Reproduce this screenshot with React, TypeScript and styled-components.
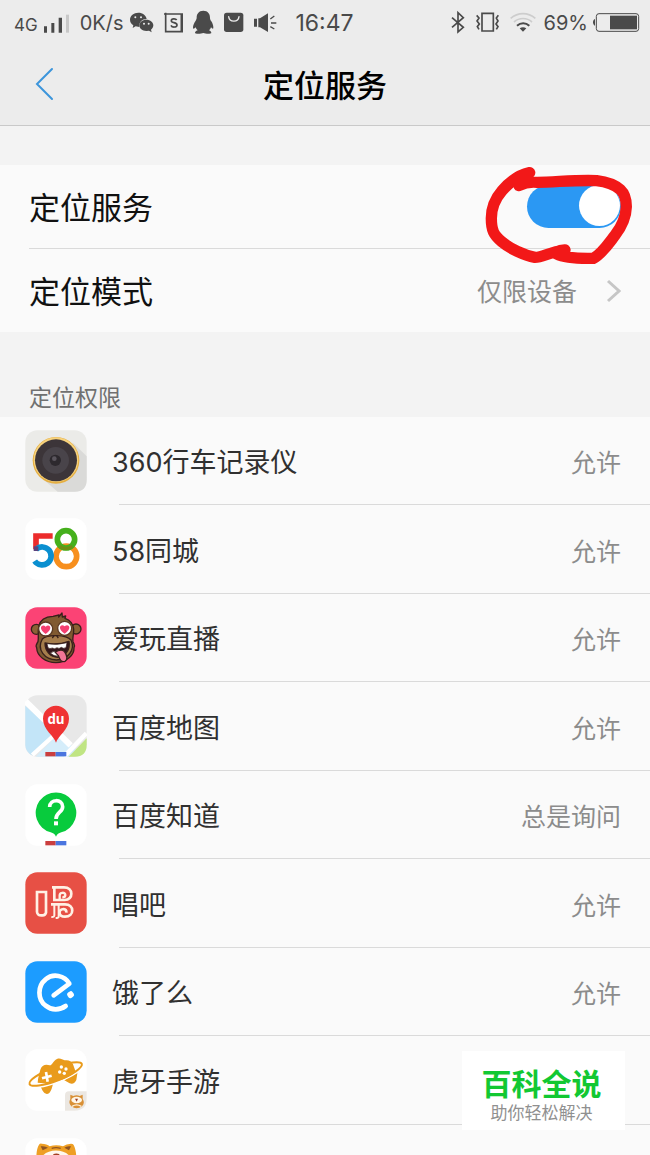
import React from 'react';
import styled, { createGlobalStyle } from 'styled-components';

const GlobalStyle = createGlobalStyle`
  *, *::before, *::after { box-sizing: border-box; }
  body { margin: 0; background: #f3f3f3; }
  button { margin: 0; padding: 0; border: 0; background: none; font: inherit; color: inherit; text-align: left; cursor: pointer; }
  h1, h2, p, ul { margin: 0; padding: 0; font-weight: 400; list-style: none; }
  svg { display: block; flex: none; }
`;

const Screen = styled.div`
  position: relative;
  display: flex;
  flex-direction: column;
  height: 100vh;
  overflow: hidden;
  background: #f3f3f3;
  color: #111;
  font-family: Inter, 'Noto Sans CJK SC', sans-serif;
`;

const Top = styled.header`
  flex: none;
  background: #ececec;
  border-bottom: 1px solid #c9c9c9;
`;

const StatusBar = styled.div`
  display: flex;
  justify-content: space-between;
  align-items: center;
  height: 43px;
  padding: 0 10px 0 14px;
  color: #4a4a4a;
`;

const StatusGroup = styled.div<{ $gap: number }>`
  display: flex;
  align-items: center;
  gap: ${(p) => p.$gap}px;
`;

const StatusText = styled.span<{ $size: number; $low?: boolean }>`
  font-size: ${(p) => p.$size}px;
  line-height: 24px;
  padding-top: ${(p) => (p.$low ? 6 : 2)}px;
  white-space: nowrap;
`;

const Clock = styled.time`
  margin-left: 9px;
  padding-top: 2px;
  font-size: 23px;
  line-height: 28px;
`;

const TitleBar = styled.div`
  display: grid;
  grid-template-columns: 1fr auto 1fr;
  align-items: center;
  height: 82px;
  padding: 0 29px;
`;

const BackButton = styled.button`
  justify-self: start;
  && { padding: 4px 6px; }
`;

const Title = styled.h1`
  padding-top: 3px;
  font-size: 31px;
  line-height: 40px;
  font-weight: 500;
  color: #000;
`;

const Panel = styled.section`
  flex: none;
  margin-top: 39px;
  background: #fafafa;
`;

const settingRow = `
  position: relative;
  display: flex;
  align-items: center;
  justify-content: space-between;
  width: 100%;
  height: 83px;
  padding: 0 29px;
`;

const SwitchRow = styled.label`
  ${settingRow}
`;

const LinkRow = styled.button`
  && { ${settingRow} }
`;

const SettingName = styled.span`
  padding-top: 2px;
  font-size: 31px;
  line-height: 40px;
`;

const Divider = styled.div<{ $inset: number }>`
  flex: none;
  height: 1px;
  margin-left: ${(p) => p.$inset}px;
  background: #dadada;
`;

const Switch = styled.input`
  appearance: none;
  display: flex;
  justify-content: flex-end;
  width: 94px;
  height: 43px;
  margin: 0;
  padding: 0 1px 2px;
  border-radius: 22px;
  background: #2b98f3;
  &::before {
    content: '';
    width: 41px;
    height: 41px;
    border-radius: 50%;
    background: #fff;
  }
  &:not(:checked) { background: #ccc; justify-content: flex-start; }
`;

const Marker = styled.svg`
  position: absolute;
  top: -10px;
  right: 0;
  z-index: 1;
  pointer-events: none;
`;

const Value = styled.span`
  padding-top: 2px;
  color: #8c8c8c;
  font-size: 25px;
  line-height: 36px;
`;

const ValueGroup = styled.span`
  display: flex;
  align-items: center;
  gap: 29px;
`;

const SectionLabel = styled.h2`
  flex: none;
  && { padding: 49px 29px 2px; }
  font-size: 23px;
  line-height: 34px;
  color: #707070;
`;

const AppList = styled.ul`
  background: #fafafa;
`;

const AppItem = styled.li`
  display: flex;
  flex-direction: column;
  height: 88px;
  &:nth-child(even) { height: 89px; }
`;

const AppButton = styled.button`
  flex: 1;
  display: flex;
  align-items: center;
  width: 100%;
  && { padding: 0 29px 0 25px; }
`;

const AppName = styled.span`
  flex: 1;
  margin-left: 25px;
  padding-top: 5px;
  font-size: 27px;
  line-height: 36px;
  color: #303030;
`;

const Permission = styled(Value)`
  padding-top: 5px;
`;

const Badge = styled.aside`
  position: absolute;
  right: 25px;
  bottom: 25px;
  width: 163px;
  padding: 14px 4px 6px 0;
  background: #fff;
  text-align: center;
`;

const BadgeTitle = styled.p`
  font-size: 30px;
  line-height: 38px;
  && { font-weight: 700; }
  color: #12c832;
`;

const BadgeText = styled.p`
  font-size: 17px;
  line-height: 21px;
  color: #909090;
`;

/* Status glyphs are drawn on a grid three times their displayed size. */
const Glyph = ({ x, w, children }: { x: number; w: number; children: React.ReactNode }) => (
  <svg width={w} height={24} viewBox={`${x} 28 ${w * 3} 72`} fill="#4a4a4a" aria-hidden="true">
    {children}
  </svg>
);

const Signal = () => (
  <Glyph x={129} w={26}>
    <path d="M129 77h9v19h-9zM151 67h9v29h-9zM173 51h10v45h-10z" />
    <path d="M195 42h9v54h-9z" fill="#c8c8c8" />
  </Glyph>
);

const WeChat = () => (
  <Glyph x={386} w={24}>
    <path d="M411 36c-14 0-25 9-25 21 0 7 4 13 10 17l-2 8 9-5 11 2c-2-14 8-24 22-24-2-11-12-19-25-19z" />
    <path d="M435 57c-12 0-21 8-21 17 0 10 9 17 21 17l8-1 8 5-2-8c4-3 7-8 7-13 0-9-9-17-21-17z" />
    <g fill="#ececec">
      <circle cx="402" cy="50" r="3" /><circle cx="419" cy="50" r="3" />
      <circle cx="428" cy="69" r="3" /><circle cx="442" cy="69" r="3" />
    </g>
  </Glyph>
);

const Scan = () => (
  <Glyph x={487} w={19}>
    <path d="M487 40h55v53h-50V36M539 40v53" fill="none" stroke="#4a4a4a" strokeWidth="5" />
    <path d="M525 58c-3-5-16-5-16 2 0 8 17 4 17 13 0 8-15 8-18 1" fill="none" stroke="#4a4a4a" strokeWidth="5" />
  </Glyph>
);

const Penguin = () => (
  <Glyph x={576} w={21}>
    <path d="M607 30c-14 0-20 10-20 21 0 4-2 7-4 11-4 6-7 13-7 19 0 5 4 4 8-1 1 4 3 7 6 9-6 2-8 5-8 8 0 3 18 3 25 0 7 3 24 3 24 0 0-3-2-6-7-8 3-2 5-5 6-9 4 5 7 6 7 1 0-6-2-13-6-19-3-4-4-7-4-11 0-11-6-21-20-21z" />
  </Glyph>
);

const Bag = () => (
  <Glyph x={671} w={20}>
    <rect x="671" y="36" width="58" height="58" rx="8" />
    <path d="M685 48c2 18 29 18 31 0" fill="none" stroke="#ececec" strokeWidth="4" strokeLinecap="round" />
  </Glyph>
);

const Speaker = () => (
  <Glyph x={762} w={23}>
    <path d="M762 54h9v24h-9zM775 53h5l24-15v56l-24-14h-5z" />
    <path d="M811 55l12-9M813 67h16M811 78l12 7" stroke="#4a4a4a" strokeWidth="4" />
  </Glyph>
);

const Bluetooth = () => (
  <Glyph x={388} w={15}>
    <path d="M391 51l34 29-16 14V36l16 15-34 29" fill="none" stroke="#4a4a4a" strokeWidth="5" />
  </Glyph>
);

const Vibrate = () => (
  <Glyph x={466} w={24}>
    <path d="M484 38h34v53h-34zM468 44l7 8-6 9 7 9-6 8 5 8M533 44l-6 8 5 9-6 9 6 8-5 8" fill="none" stroke="#4a4a4a" strokeWidth="5" />
  </Glyph>
);

const Wifi = () => (
  <Glyph x={570} w={26}>
    <path d="M572 53c22-19 52-19 74 0M582 64c16-14 38-14 54 0" fill="none" stroke="#cdcdcd" strokeWidth="5" />
    <path d="M591 75c11-10 26-10 37 0" fill="none" stroke="#4a4a4a" strokeWidth="6" />
    <path d="M599 83q10-7 20 0l-10 10z" />
  </Glyph>
);

const Battery = () => (
  <Glyph x={819} w={47}>
    <path d="M825 55c-8 2-8 18 0 20z" />
    <rect x="829" y="39" width="127" height="53" rx="8" fill="none" stroke="#4a4a4a" strokeWidth="3" />
    <path d="M870 45h81v41h-81z" />
  </Glyph>
);

/* App icons share a 186-unit canvas. */
const Tile = ({ fill, children }: { fill: string; children: React.ReactNode }) => (
  <svg width="62" height="62" viewBox="0 0 186 186" aria-hidden="true">
    <rect x="1" y="1" width="184" height="184" rx="36" fill={fill} />
    {children}
  </svg>
);

const CameraIcon = () => (
  <Tile fill="#ebebe8">
    <path d="M145 40l40 39v70q0 36-36 36H98L48 142z" fill="#dadad8" />
    <circle cx="93" cy="91" r="70" fill="#e5af42" />
    <circle cx="93" cy="89" r="67" fill="#f7d27c" />
    <circle cx="93" cy="91" r="63" fill="#3c3539" />
    <circle cx="92" cy="91" r="40" fill="#49444a" />
    <circle cx="91" cy="91" r="17" fill="#2d292e" />
    <circle cx="88" cy="86" r="7" fill="#5b565e" />
  </Tile>
);

const FiveEightIcon = () => (
  <Tile fill="#fff">
    <g fill="none" strokeWidth="17">
      <path d="M83 54H33v40" stroke="#ec2c2c" />
      <circle cx="124" cy="115" r="31" stroke="#f78f1e" />
      <circle cx="123" cy="64" r="26" stroke="#45b01c" />
      <path d="M104 85q19 13 38 0" stroke="#6f8f13" strokeWidth="10" />
      <path d="M33 94A27 27 0 1 1 29 129" stroke="#0a8fd0" />
      <path d="M26 92h14" stroke="#5b437e" strokeWidth="14" />
    </g>
  </Tile>
);

const MonkeyIcon = () => (
  <Tile fill="#fb4375">
    <g stroke="#38201b" strokeWidth="4" strokeLinejoin="round">
      <circle cx="34" cy="67" r="15" fill="#8b6235" />
      <circle cx="153" cy="66" r="15" fill="#8b6235" />
      <path d="M42 56c4-18 22-27 42-28l18-4-1 6 10-12 1 12 10-3-2 7c14 5 24 14 26 32 1 18-5 26-2 38 3 8 8 12 3 18 1 22-22 44-54 45-32-1-57-20-58-45-5-6 1-12 4-18 3-14-2-30 3-48z" fill="#805a31" />
      <path d="M52 96c14-14 72-14 86 3 14 30-9 58-44 60-35-2-60-30-42-63z" fill="#a57d4c" />
      <path d="M60 108q35 8 72-5c4 22-8 45-34 48-22 0-38-19-38-43z" fill="#32151b" />
      <path d="M66 110q30 6 60-3l-3 15q-8 4-14-1-7 6-13 1-8 6-14 1-8 4-13-1z" fill="#fff" strokeWidth="2" />
      <path d="M76 138q10-8 20-1l5 10q-14 3-25-9z" fill="#fff" strokeWidth="2" />
      <path d="M91 136c10-8 24-10 29 0 6 10 9 22 0 27-14 4-16-9-20-17z" fill="#f17596" />
      <circle cx="62" cy="66" r="21" fill="#fff" stroke="#5b3a23" />
      <circle cx="119" cy="64" r="21" fill="#fff" stroke="#5b3a23" />
      <path d="M87 86l-5 7M95 86l5 7" fill="none" />
    </g>
    <path d="M62 81C36 63 52 49 62 59c10-10 26 4 0 22zM119 80c-26-18-10-32 0-22 10-10 26 4 0 22z" fill="#f43f70" />
  </Tile>
);

const BaiduBar = () => (
  <>
    <path d="M61 171h31v13H61z" fill="#ca3e3e" />
    <path d="M92 171h32v13H92z" fill="#4a75df" />
  </>
);

const MapIcon = () => (
  <Tile fill="#e8e8e8">
    <path d="M1 32l91 82-69 67Q1 172 1 150z" fill="#c3e5f8" />
    <path d="M32 185l70-71 50 50-18 21z" fill="#d5edfa" />
    <path d="M131 185l54-55v19q0 36-36 36z" fill="#c0e583" />
    <path d="M2 19l135 132" stroke="#fff" strokeWidth="18" />
    <path d="M22 180l76-69M118 184l66-69" fill="none" stroke="#fff" strokeWidth="13" />
    <path d="M93 143C88 122 54 105 54 71a39 39 0 1 1 78 0c0 34-34 51-39 72z" fill="#ef3333" />
    <text x="93" y="86" textAnchor="middle" fill="#fff" fontFamily="'Open Sans', sans-serif" fontWeight="700" fontSize="40">du</text>
    <BaiduBar />
  </Tile>
);

const QuestionIcon = () => (
  <Tile fill="#fff">
    <path d="M93 158c-3-8-8-10-16-13a61 61 0 1 1 32 0c-8 3-13 5-16 13z" fill="#08cb3d" />
    <path d="M74 69c0-25 39-25 39-1 0 17-20 16-20 37" fill="none" stroke="#fff" strokeWidth="11" />
    <path d="M87 112h12v12H87z" fill="#fff" />
    <BaiduBar />
  </Tile>
);

const SingIcon = () => (
  <Tile fill="#e75045">
    <g fill="none" stroke="#fff1e5" strokeWidth="8">
      <path d="M36 60h27v62q-2 8-10 8-16 2-17-10z" />
      <path d="M81 46h36c29 0 29 38 2 38H88V46" />
      <path d="M104 84V70c0-10 17-10 17-1q0 7-9 7" strokeWidth="7" />
      <path d="M78 97h42c29 0 29 37 0 37-21 0-21-23-4-23q9 1 8 11" />
      <path d="M88 97v33q0 6-9 5M101 97v37q-1 4-9 4" strokeWidth="6" />
    </g>
  </Tile>
);

const ElemeIcon = () => (
  <Tile fill="#1c9cff">
    <path d="M86 103l47-35C119 43 84 36 62 55c-25 20-25 60 0 79 18 15 42 14 60 1" fill="none" stroke="#fff" strokeWidth="14" strokeLinecap="round" strokeLinejoin="round" />
    <rect x="127" y="92" width="19" height="19" rx="7" transform="rotate(-35 136 101)" fill="#fff" />
  </Tile>
);

const HuyaIcon = () => (
  <Tile fill="#fff">
    <path d="M44 106l8 18q9 16 21 8 8-9 11-29zM118 94l16 9q14 4 20-10l4-26z" fill="#e99b1c" />
    <g transform="rotate(-21 92 75)" fill="none">
      <ellipse cx="92" cy="75" rx="84" ry="20" stroke="#fff" strokeWidth="14" />
      <ellipse cx="92" cy="75" rx="84" ry="20" fill="#fff" stroke="#e99b1c" strokeWidth="6" />
    </g>
    <path d="M38 101c1-16 5-27 8-39 4-14 16-17 28-13 8 1 10-14 22-19 10-4 16 3 23 4 11-2 20 1 25 12l8 22c-22 20-72 40-114 33z" fill="#e99b1c" />
    <path d="M63 69l5 29M51 88l29-8" stroke="#fff" strokeWidth="8" />
    <g fill="#fff"><circle cx="109" cy="54" r="5" /><circle cx="123" cy="60" r="5" /><circle cx="104" cy="69" r="5" /><circle cx="118" cy="73" r="5" /></g>
    <path d="M132 127h53v21q0 37-36 37h-29v-46q0-12 12-12z" fill="#ebe7e2" />
    <path d="M136 137l9 4q10-4 19 0l9-4v13q8 12-2 22-16 12-32 0-10-10-3-22z" fill="#d99036" />
    <ellipse cx="155" cy="153" rx="16" ry="10" fill="#fff7e8" />
    <path d="M150 149h9l-4 9z" fill="#9d3d24" />
    <path d="M141 172q14-9 28 0" stroke="#fff2db" strokeWidth="4" fill="none" />
  </Tile>
);

const HuyaLiveIcon = () => (
  <Tile fill="#fff">
    <path d="M34 62c0-18 2-32 8-42q3-4 8-3 16 0 24 8 20-6 40 0 10-8 24-8 6 0 8 4c6 12 8 26 8 42l4 60H30z" fill="#ee9f25" />
    <path d="M47 25q13-2 22 4l-16 8zM138 25q-13-2-20 4l14 8z" fill="#8f5424" />
    <path d="M50 60c10-30 76-30 86 0v50H50z" fill="#fff8ee" />
    <path d="M80 31q13-4 27 0" stroke="#8f5424" strokeWidth="4" fill="none" />
    <path d="M84 49q10-5 20 0l-10 10z" fill="#a34025" />
  </Tile>
);

const apps = [
  { name: '360行车记录仪', permission: '允许', Icon: CameraIcon },
  { name: '58同城', permission: '允许', Icon: FiveEightIcon },
  { name: '爱玩直播', permission: '允许', Icon: MonkeyIcon },
  { name: '百度地图', permission: '允许', Icon: MapIcon },
  { name: '百度知道', permission: '总是询问', Icon: QuestionIcon },
  { name: '唱吧', permission: '允许', Icon: SingIcon },
  { name: '饿了么', permission: '允许', Icon: ElemeIcon },
  { name: '虎牙手游', permission: '', Icon: HuyaIcon },
  { name: '', permission: '', Icon: HuyaLiveIcon },
];

export default function App() {
  return (
    <Screen>
      <GlobalStyle />
      <Top>
        <StatusBar>
          <StatusGroup $gap={10}>
            <StatusGroup $gap={6}>
              <StatusText $size={17} $low>4G</StatusText>
              <Signal />
            </StatusGroup>
            <StatusGroup $gap={6}>
              <StatusText $size={20}>0K/s</StatusText>
              <WeChat />
            </StatusGroup>
            <Scan />
            <Penguin />
            <Bag />
            <Speaker />
            <Clock>16:47</Clock>
          </StatusGroup>
          <StatusGroup $gap={10}>
            <Bluetooth />
            <Vibrate />
            <StatusGroup $gap={8}>
              <Wifi />
              <StatusGroup $gap={5}>
                <StatusText $size={20}>69%</StatusText>
                <Battery />
              </StatusGroup>
            </StatusGroup>
          </StatusGroup>
        </StatusBar>
        <TitleBar>
          <BackButton type="button" aria-label="返回">
            <svg width="20" height="34" viewBox="0 0 20 34" aria-hidden="true">
              <path d="M17 2L2 17l15 15" fill="none" stroke="#3c95db" strokeWidth="2" strokeLinecap="round" />
            </svg>
          </BackButton>
          <Title>定位服务</Title>
        </TitleBar>
      </Top>

      <Panel>
        <SwitchRow>
          <SettingName>定位服务</SettingName>
          <Switch type="checkbox" role="switch" defaultChecked />
          <Marker width="190" height="180" viewBox="0 0 570 540" aria-hidden="true">
            <path
              d="M209 53C180 59 148 82 126 107C106 130 94 160 94 190C94 226 101 240 125 260C150 281 192 301 225 307C250 307 266 291 315 285C294 287 284 292 290 297C310 307 355 311 400 310C425 298 447 264 465 241C488 211 498 188 499 155C499 132 495 117 481 104C463 88 435 80 410 77C350 74 282 82 232 82C210 80 195 82 177 92"
              fill="none" stroke="#f21818" strokeWidth="34" strokeLinecap="round" strokeLinejoin="round"
            />
          </Marker>
        </SwitchRow>
        <Divider $inset={29} />
        <LinkRow type="button">
          <SettingName>定位模式</SettingName>
          <ValueGroup>
            <Value>仅限设备</Value>
            <svg width="15" height="26" viewBox="0 0 15 26" aria-hidden="true">
              <path d="M2 3l11 10L2 23" fill="none" stroke="#c6c6c6" strokeWidth="3" />
            </svg>
          </ValueGroup>
        </LinkRow>
      </Panel>

      <SectionLabel>定位权限</SectionLabel>
      <AppList>
        {apps.map(({ name, permission, Icon }, i) => (
          <AppItem key={i}>
            <AppButton type="button">
              <Icon />
              <AppName>{name}</AppName>
              <Permission>{permission}</Permission>
            </AppButton>
            <Divider $inset={119} />
          </AppItem>
        ))}
      </AppList>

      <Badge>
        <BadgeTitle>百科全说</BadgeTitle>
        <BadgeText>助你轻松解决</BadgeText>
      </Badge>
    </Screen>
  );
}
